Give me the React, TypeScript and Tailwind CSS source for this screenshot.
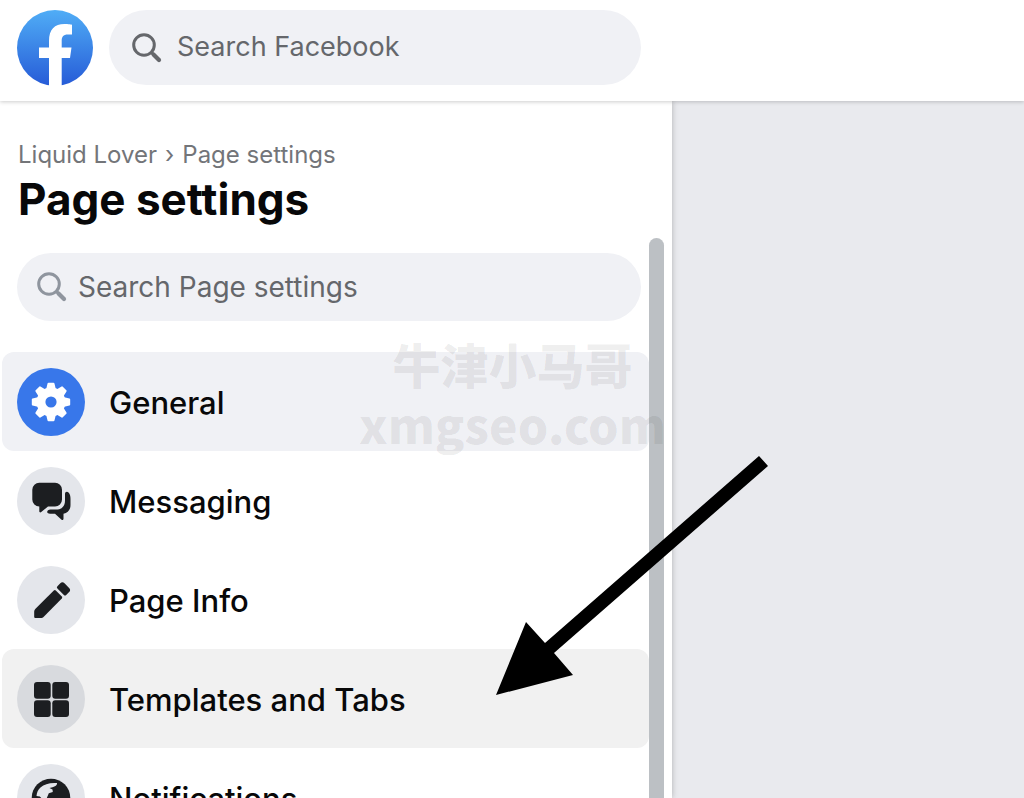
import type { ReactNode } from 'react'

const GearIcon = () => (
  <svg viewBox="0 0 68 68" className="size-full" aria-hidden>
    <g fill="#fff" stroke="#fff" strokeWidth="2" strokeLinejoin="round">
      {[0, 45, 90, 135, 180, 225, 270, 315].map((angle) => (
        <path key={angle} d="M30 22 31.500 15.800h5L38 22z" transform={`rotate(${angle} 34 34)`} />
      ))}
    </g>
    <circle cx="34" cy="34" r="10" fill="none" stroke="#fff" strokeWidth="8.800" />
  </svg>
)

const MessagesIcon = () => (
  <svg viewBox="0 0 68 68" className="size-full" fill="#1c1e21" aria-hidden>
    <path d="M22.500 15.700H38a7 7 0 0 1 7 7V32.500a7 7 0 0 1-7 7H31l-6.800 5.600c-.9.700-1.900.3-1.900-.8V39.500a7 7 0 0 1-7-7V22.700a7 7 0 0 1 7.200-7z" />
    <path d="M48 27c0-2.700 2.500-2.700 3.500-1.500 1.500 1.500 2 3.500 2 6.500v6c0 4.500-2.500 8-7 8.700v4.800c0 1.500-1 2-2.200 1L38 46.700h-5c-1.500 0-2.800-.7-2.800-1.700 0-1.500 1.300-2.400 3.300-2.400H39c6 0 9-3.600 9-9.100z" />
  </svg>
)

const PencilIcon = () => (
  <svg viewBox="0 0 68 68" className="size-full" fill="#1c1e21" aria-hidden>
    <path d="M36.800 24.500a1.500 1.500 0 0 1 2 0l6 6a1.500 1.500 0 0 1 0 2L27 50.500C26 51.500 25 52 23.500 52H18.500c-.8 0-1.300-.5-1.300-1.300V46c0-1.400.4-2.400 1.300-3.300z" />
    <path d="M43.300 17.300a3 3 0 0 1 4.200 0l4.600 4.600a3 3 0 0 1 0 4.200l-2.900 2.900a1.600 1.600 0 0 1-2.300 0l-6.500-6.500a1.600 1.600 0 0 1 0-2.300z" />
  </svg>
)

const GridIcon = () => (
  <svg viewBox="0 0 68 68" className="size-full" fill="#1c1e21" aria-hidden>
    <rect x="17" y="17" width="16.700" height="16.700" rx="3" />
    <rect x="35.300" y="17" width="16.700" height="16.700" rx="3" />
    <rect x="17" y="35.300" width="16.700" height="16.700" rx="3" />
    <rect x="35.300" y="35.300" width="16.700" height="16.700" rx="3" />
  </svg>
)

const GlobeIcon = () => (
  <svg viewBox="0 0 68 68" className="size-full" aria-hidden>
    <circle cx="34" cy="34" r="19.300" fill="#1c1e21" />
    <path
      fill="#e4e6eb"
      d="M19.500 32c.3-3.500 1.500-6.500 4-8.500 4-3.500 9-5 16.500-4.500.3 2-1.500 3.300-4.500 4.200l-3 .8 3 1.500.3 2.500-4 1.200-2 4.800-4 1.500-3-3z"
    />
  </svg>
)

const SearchIcon = ({ className }: { className: string }) => (
  <svg viewBox="0 0 30 30" className={className} fill="none" stroke="currentColor" aria-hidden>
    <circle cx="12" cy="12" r="10.300" />
    <path d="M19 19l3 3" />
    <path d="M21.500 21.500 27 27" strokeWidth="4.200" strokeLinecap="round" />
  </svg>
)

const FacebookLogo = () => (
  <svg viewBox="0 0 76 76" className="size-[76px]" aria-hidden>
    <defs>
      <linearGradient id="logo" x1="0" y1="0" x2="0" y2="1">
        <stop offset="0" stopColor="#50adf6" />
        <stop offset="1" stopColor="#265bd7" />
      </linearGradient>
    </defs>
    <circle cx="38" cy="38" r="38" fill="url(#logo)" />
    <path
      fill="#fff"
      d="M32 76V48H22V37.500h10V31c0-11.500 5.500-17 15.500-17 3.500 0 7.500.7 7.500.7v9.800h-4c-5 0-6.300 2.500-6.300 6.500v6.500h9.800L53 48h-8.300v28z"
    />
  </svg>
)

type Item = { label: string; icon: ReactNode; row: string; circle: string }

const items: Item[] = [
  { label: 'General', icon: <GearIcon />, row: 'bg-[#f0f1f5]', circle: 'bg-[#3877ea]' },
  { label: 'Messaging', icon: <MessagesIcon />, row: '', circle: 'bg-[#e4e6eb]' },
  { label: 'Page Info', icon: <PencilIcon />, row: '', circle: 'bg-[#e4e6eb]' },
  { label: 'Templates and Tabs', icon: <GridIcon />, row: 'bg-[#f1f1f1]', circle: 'bg-[#d8dade]' },
  { label: 'Notifications', icon: <GlobeIcon />, row: '', circle: 'bg-[#e4e6eb]' },
]

const Header = () => (
  <header className="relative z-10 flex h-[101px] shrink-0 items-start gap-4 bg-white pt-[10px] pl-[17px] shadow-[0_1px_4px_rgba(0,0,0,0.2)]">
    <a href="#" aria-label="Facebook" className="shrink-0">
      <FacebookLogo />
    </a>
    <label className="flex h-[75px] w-full max-w-[532px] items-center gap-[15px] rounded-full bg-[#f0f1f5] px-[23px]">
      <SearchIcon className="size-[30px] shrink-0 stroke-3 text-[#65676b]" />
      <input
        type="text"
        aria-label="Search Facebook"
        placeholder="Search Facebook"
        className="h-10 min-w-0 flex-1 bg-transparent text-[27px] outline-none placeholder:text-[#65676b]"
      />
    </label>
  </header>
)

const Sidebar = () => (
  <aside className="relative flex w-[672px] max-w-full shrink-0 flex-col bg-white shadow-[0_0_6px_rgba(0,0,0,0.25)]">
    <div className="h-[137px] shrink-0 pt-10 pl-[18px]">
      <nav aria-label="Breadcrumb" className="flex gap-2 text-[24px] leading-7 text-[#737579]">
        <a href="#">Liquid Lover</a>
        <span>›</span>
        <a href="#">Page settings</a>
      </nav>
      <h1 className="text-[44px] leading-[60px] font-bold text-[#080809]">Page settings</h1>
    </div>
    <div className="flex min-h-0 flex-1">
      <div className="min-w-0 flex-1 overflow-hidden">
        <div className="pt-[15px] pr-2 pb-[31px] pl-[17px]">
          <label className="flex h-[68px] items-center gap-[11px] rounded-full bg-[#f0f1f5] px-5">
            <SearchIcon className="size-[30px] shrink-0 stroke-3 text-[#8f959e]" />
            <input
              type="text"
              aria-label="Search Page settings"
              placeholder="Search Page settings"
              className="h-10 min-w-0 flex-1 bg-transparent text-[28px] outline-none placeholder:text-[#65676b]"
            />
          </label>
        </div>
        <nav aria-label="Page settings" className="pl-[2px]">
          {items.map(({ label, icon, row, circle }) => (
            <a key={label} href="#" className={`flex h-[99px] items-center gap-6 rounded-xl pl-[15px] ${row}`}>
              <span className={`size-[68px] shrink-0 rounded-full ${circle}`}>{icon}</span>
              <span className="pt-[3px] text-[31px] leading-10 font-medium text-[#080809]">{label}</span>
            </a>
          ))}
        </nav>
      </div>
      <div className="mr-2 w-[15px] shrink-0 rounded-t-full bg-[#bcc0c4]" />
    </div>
  </aside>
)

const App = () => (
  <div className="relative flex h-screen flex-col overflow-hidden bg-[#e9eaee] font-['Inter',sans-serif]">
    <Header />
    <div className="flex min-h-0 flex-1">
      <Sidebar />
      <main className="flex-1" />
    </div>

    {/* watermark and pointer float above the page */}
    <div className="pointer-events-none absolute top-[333px] left-[359px] z-20 text-center font-['Noto_Sans_CJK_SC',sans-serif] text-[48px] leading-[60px] font-black text-black/7">
      <p>牛津小马哥</p>
      <p>xmgseo.com</p>
    </div>
    <svg viewBox="0 0 272 239" className="pointer-events-none absolute top-[456px] left-[496px] z-20 w-[272px]" aria-hidden>
      <path d="M0 239 30 166 49 187 263 0 272 10 58 197 77 219z" />
    </svg>
  </div>
)

export default App
